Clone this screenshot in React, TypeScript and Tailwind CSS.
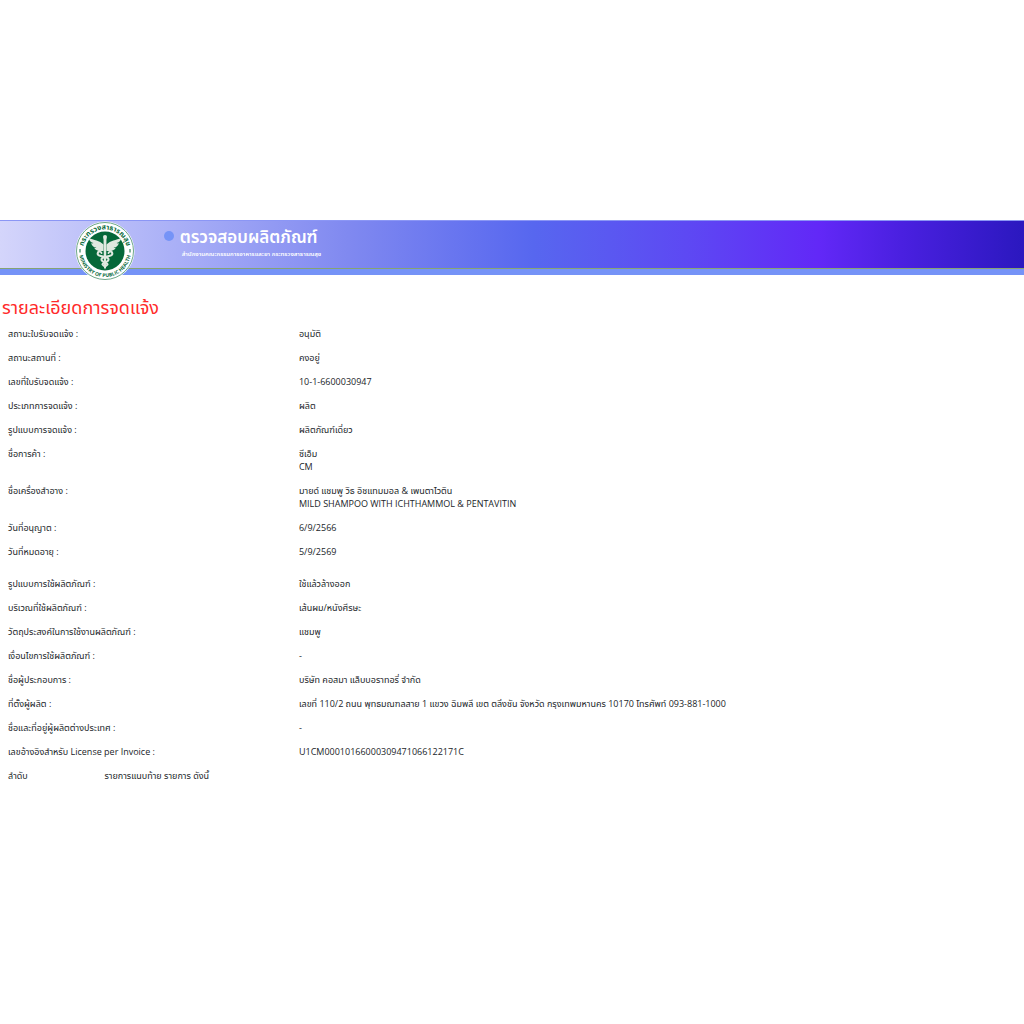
interface DetailRow {
  label: string;
  lines: string[];
}

const NOTIFICATION_ROWS: DetailRow[] = [
  { label: "สถานะใบรับจดแจ้ง :", lines: ["อนุมัติ"] },
  { label: "สถานะสถานที่ :", lines: ["คงอยู่"] },
  { label: "เลขที่ใบรับจดแจ้ง :", lines: ["10-1-6600030947"] },
  { label: "ประเภทการจดแจ้ง :", lines: ["ผลิต"] },
  { label: "รูปแบบการจดแจ้ง :", lines: ["ผลิตภัณฑ์เดี่ยว"] },
  { label: "ชื่อการค้า :", lines: ["ซีเอ็ม", "CM"] },
  {
    label: "ชื่อเครื่องสำอาง :",
    lines: ["มายด์ แชมพู วิธ อิชแทมมอล & เพนตาไวติน", "MILD SHAMPOO WITH ICHTHAMMOL & PENTAVITIN"],
  },
  { label: "วันที่อนุญาต :", lines: ["6/9/2566"] },
  { label: "วันที่หมดอายุ :", lines: ["5/9/2569"] },
];

const USAGE_ROWS: DetailRow[] = [
  { label: "รูปแบบการใช้ผลิตภัณฑ์ :", lines: ["ใช้แล้วล้างออก"] },
  { label: "บริเวณที่ใช้ผลิตภัณฑ์ :", lines: ["เส้นผม/หนังศีรษะ"] },
  { label: "วัตถุประสงค์ในการใช้งานผลิตภัณฑ์ :", lines: ["แชมพู"] },
  { label: "เงื่อนไขการใช้ผลิตภัณฑ์ :", lines: ["-"] },
  { label: "ชื่อผู้ประกอบการ :", lines: ["บริษัท คอสมา แล็บบอราทอรี่ จำกัด"] },
  {
    label: "ที่ตั้งผู้ผลิต :",
    lines: ["เลขที่ 110/2 ถนน พุทธมณฑลสาย 1 แขวง ฉิมพลี เขต ตลิ่งชัน จังหวัด กรุงเทพมหานคร 10170 โทรศัพท์ 093-881-1000"],
  },
  { label: "ชื่อและที่อยู่ผู้ผลิตต่างประเทศ :", lines: ["-"] },
  { label: "เลขอ้างอิงสำหรับ License per Invoice :", lines: ["U1CM00010166000309471066122171C"] },
];

function MinistryLogo() {
  return (
    <svg viewBox="0 0 120 120" className="h-15 w-15 shrink-0" role="img" aria-label="Ministry of Public Health">
      <defs>
        <path id="arc-top" d="M 16 68 A 44.5 44.5 0 1 1 104 68" />
        <path id="arc-bottom" d="M 8 60 A 52 52 0 0 0 112 60" />
      </defs>
      <circle cx="60" cy="60" r="59" fill="#fff" />
      <circle cx="60" cy="60" r="57" fill="none" stroke="#3d8a62" strokeWidth="1.5" />
      <circle cx="60" cy="60" r="39" fill="#056839" />
      <text fill="#056839" fontSize="14" fontWeight="700" textAnchor="middle">
        <textPath href="#arc-top" startOffset="50%">กระทรวงสาธารณสุข</textPath>
      </text>
      <text fill="#056839" fontSize="10" fontWeight="700" textAnchor="middle">
        <textPath href="#arc-bottom" startOffset="50%">MINISTRY OF PUBLIC HEALTH</textPath>
      </text>
      <path d="M10 56v7M110 56v7" stroke="#056839" strokeWidth="2" />
      {/* Winged staff */}
      <g fill="#dfe9df">
        <path d="M57 47C49 39 38 38 27 34c2 6 5 9 10 10-2 1-4 1-5 0 2 6 6 9 11 9-2 1-4 1-5 0 3 6 10 8 19 7z" />
        <path d="M63 47c8-8 19-9 30-13-2 6-5 9-10 10 2 1 4 1 5 0-2 6-6 9-11 9 2 1 4 1 5 0-3 6-10 8-19 7z" />
        <circle cx="60" cy="32" r="4" />
        <path d="M57 34h6l-1 59-2 4-2-4z" />
      </g>
      <g fill="none" stroke="#dfe9df" strokeWidth="4" strokeLinecap="round">
        <path d="M46 63c-3 6 4 7 14 9s9 8 0 11-4 6 0 8" />
        <path d="M74 63c3 6-4 7-14 9s-9 8 0 11 4 6 0 8" />
        <path d="M46 63c2-3 6-2 7 1M74 63c-2-3-6-2-7 1" />
      </g>
    </svg>
  );
}

function DetailList({ rows }: { rows: DetailRow[] }) {
  return (
    <dl>
      {rows.map((row) => (
        <div key={row.label} className="flex pb-[11px]">
          <dt className="w-[29%] shrink-0 pl-2">{row.label}</dt>
          <dd className="min-w-0 flex-1 pl-0.5">
            {row.lines.map((line) => (
              <p key={line}>{line}</p>
            ))}
          </dd>
        </div>
      ))}
    </dl>
  );
}

export default function App() {
  return (
    <div className="min-h-screen bg-white py-55 font-['Open_Sans','Noto_Sans_Thai','Noto_Sans',sans-serif] text-[#212529]">
      <header className="relative">
        <div className="border-t border-[#8b96f5] bg-[linear-gradient(to_right,#d4d5fb_0%,#aab0f7_17%,#8089f0_34%,#5767ef_52%,#5d49f3_67%,#6228f7_80%,#4a20e0_88%,#2b18bf_100%)]">
          <div className="flex h-[47px] pl-[7.3%]">
            {/* The seal hangs over the lower edge of the banner */}
            <div className="relative z-10 h-15 shrink-0">
              <MinistryLogo />
            </div>
            <div className="flex pt-1.5 pl-[29px]">
              <span className="mt-1 mr-1.5 h-2.5 w-2.5 rounded-full bg-[#7593f7]" />
              <div className="text-white">
                <h1 className="text-[17px] leading-5 font-semibold">ตรวจสอบผลิตภัณฑ์</h1>
                <p className="pt-px pl-0.5 text-[6px] leading-3 font-semibold">
                  สำนักงานคณะกรรมการอาหารและยา กระทรวงสาธารณสุข
                </p>
              </div>
            </div>
          </div>
        </div>
        <div className="h-[7px] border-t border-[#86a372] bg-[#7593f7]" />
      </header>

      <main className="pt-5">
        <h2 className="pl-0.5 text-[18px] leading-6 text-[#ff2a2a]">รายละเอียดการจดแจ้ง</h2>
        <div className="pt-2 text-[9px] leading-[13px]">
          <DetailList rows={NOTIFICATION_ROWS} />
          <div className="pt-2">
            <DetailList rows={USAGE_ROWS} />
          </div>
          <table className="w-full text-left">
            <thead>
              <tr>
                <th className="w-[10%] pl-2 font-normal">ลำดับ</th>
                <th className="pl-0.5 font-normal">รายการแนบท้าย รายการ ดังนี้</th>
              </tr>
            </thead>
          </table>
        </div>
      </main>
    </div>
  );
}
